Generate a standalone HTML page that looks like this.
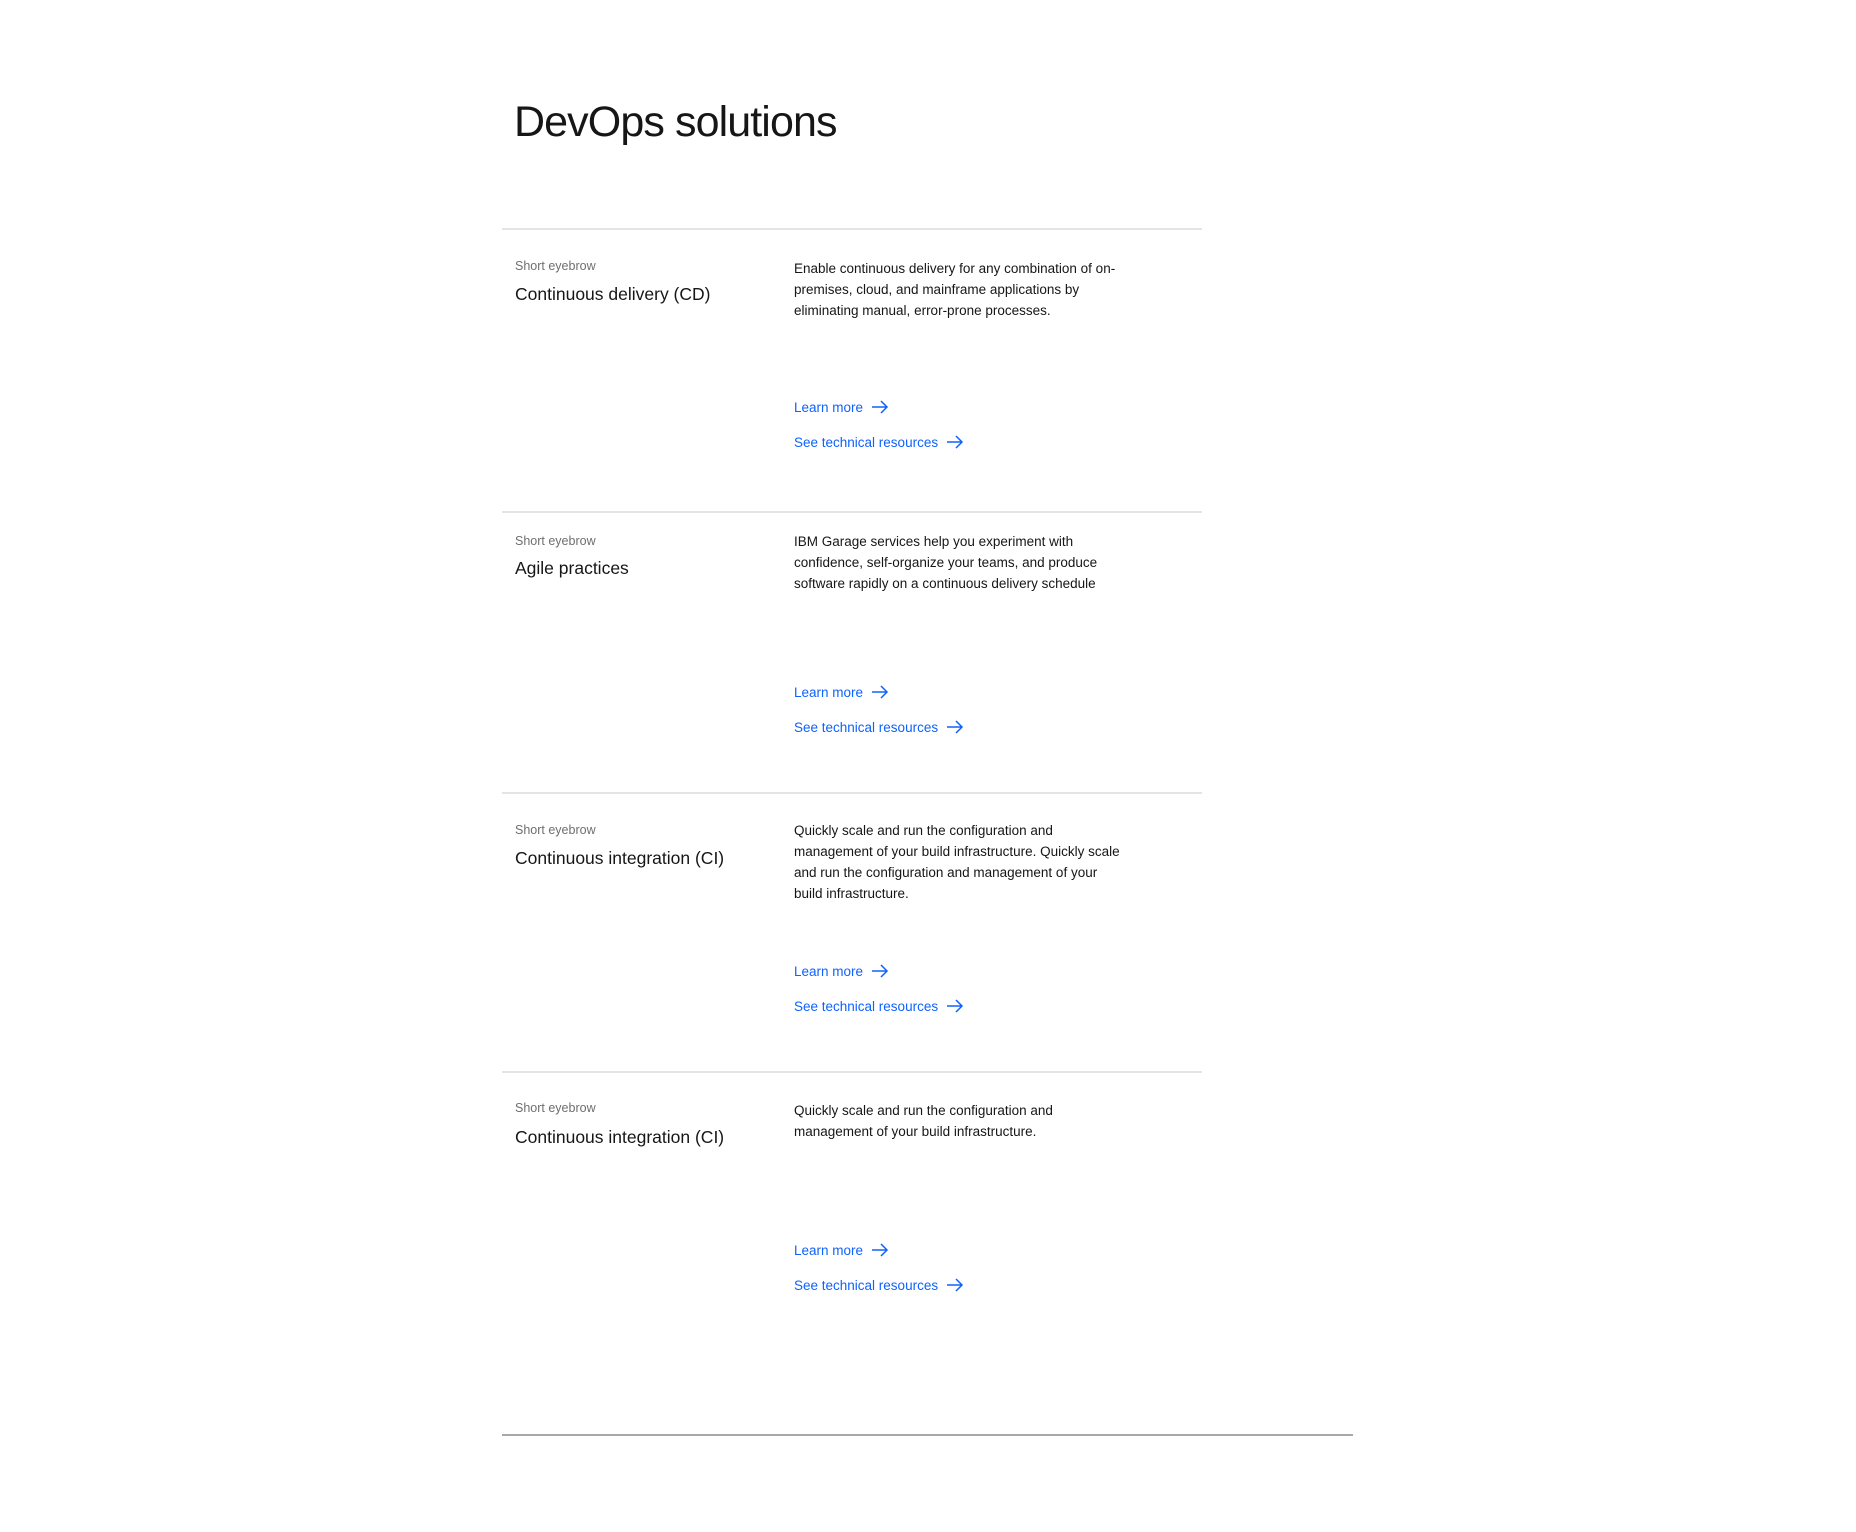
<!DOCTYPE html>
<html><head><meta charset="utf-8"><style>
body{margin:0;width:1856px;height:1532px;background:#fff;font-family:"Liberation Sans",sans-serif;position:relative;overflow:hidden}
.a{position:absolute;white-space:nowrap}
.t{left:514px;top:98px;font-size:43px;color:#161616;font-weight:300;letter-spacing:-0.9px}
.hr{position:absolute;left:502px;width:700px;height:2px;background:#e4e4e4}
.eb{font-size:12.5px;color:#6f6f6f;left:515px}
.h{font-size:17.5px;color:#161616;left:515px}
.b{font-size:13.5px;color:#161616;left:794px;line-height:21px}
.l{font-size:13.5px;color:#0f62fe;left:794px;display:flex;align-items:center}
.l svg{margin-left:8px}
</style></head><body>
<div class="a t">DevOps solutions</div>

<div class="hr" style="top:228px"></div>
<div class="a eb" style="top:259px">Short eyebrow</div>
<div class="a h" style="top:284px">Continuous delivery (CD)</div>
<div class="a b" style="top:258px">Enable continuous delivery for any combination of on-<br>premises, cloud, and mainframe applications by<br>eliminating manual, error-prone processes.</div>
<div class="a l" style="top:399px">Learn more<svg width="18" height="16" viewBox="0 0 18 16"><path d="M1 8H16M10 2L16 8L10 14" fill="none" stroke="#0f62fe" stroke-width="1.5"/></svg></div>
<div class="a l" style="top:434px">See technical resources<svg width="18" height="16" viewBox="0 0 18 16"><path d="M1 8H16M10 2L16 8L10 14" fill="none" stroke="#0f62fe" stroke-width="1.5"/></svg></div>

<div class="hr" style="top:511px"></div>
<div class="a eb" style="top:534px">Short eyebrow</div>
<div class="a h" style="top:558px">Agile practices</div>
<div class="a b" style="top:531px">IBM Garage services help you experiment with<br>confidence, self-organize your teams, and produce<br>software rapidly on a continuous delivery schedule</div>
<div class="a l" style="top:684px">Learn more<svg width="18" height="16" viewBox="0 0 18 16"><path d="M1 8H16M10 2L16 8L10 14" fill="none" stroke="#0f62fe" stroke-width="1.5"/></svg></div>
<div class="a l" style="top:719px">See technical resources<svg width="18" height="16" viewBox="0 0 18 16"><path d="M1 8H16M10 2L16 8L10 14" fill="none" stroke="#0f62fe" stroke-width="1.5"/></svg></div>

<div class="hr" style="top:792px"></div>
<div class="a eb" style="top:823px">Short eyebrow</div>
<div class="a h" style="top:848px">Continuous integration (CI)</div>
<div class="a b" style="top:820px">Quickly scale and run the configuration and<br>management of your build infrastructure. Quickly scale<br>and run the configuration and management of your<br>build infrastructure.</div>
<div class="a l" style="top:963px">Learn more<svg width="18" height="16" viewBox="0 0 18 16"><path d="M1 8H16M10 2L16 8L10 14" fill="none" stroke="#0f62fe" stroke-width="1.5"/></svg></div>
<div class="a l" style="top:998px">See technical resources<svg width="18" height="16" viewBox="0 0 18 16"><path d="M1 8H16M10 2L16 8L10 14" fill="none" stroke="#0f62fe" stroke-width="1.5"/></svg></div>

<div class="hr" style="top:1071px"></div>
<div class="a eb" style="top:1101px">Short eyebrow</div>
<div class="a h" style="top:1127px">Continuous integration (CI)</div>
<div class="a b" style="top:1100px">Quickly scale and run the configuration and<br>management of your build infrastructure.</div>
<div class="a l" style="top:1242px">Learn more<svg width="18" height="16" viewBox="0 0 18 16"><path d="M1 8H16M10 2L16 8L10 14" fill="none" stroke="#0f62fe" stroke-width="1.5"/></svg></div>
<div class="a l" style="top:1277px">See technical resources<svg width="18" height="16" viewBox="0 0 18 16"><path d="M1 8H16M10 2L16 8L10 14" fill="none" stroke="#0f62fe" stroke-width="1.5"/></svg></div>

<div style="position:absolute;left:502px;top:1434px;width:851px;height:2px;background:#a8a8a8"></div>
</body></html>
